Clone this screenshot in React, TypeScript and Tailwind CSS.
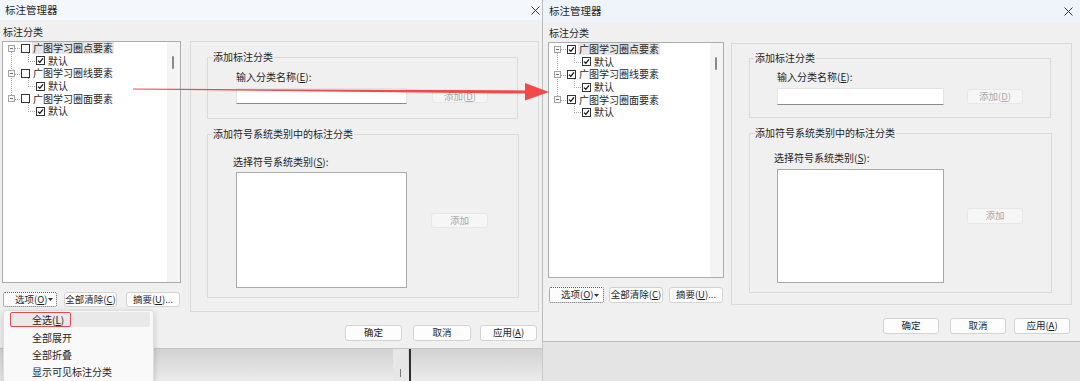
import React from "react";

const GROUPS = ["广图学习圈点要素", "广图学习圈线要素", "广图学习圈面要素"];

function Key({ k }: { k: string }) {
  return (
    <>
      (<span className="underline underline-offset-1">{k}</span>)
    </>
  );
}

function Btn({ className = "", disabled = false, children }: { className?: string; disabled?: boolean; children: React.ReactNode }) {
  return (
    <div
      className={`flex items-center justify-center rounded-[3px] border text-[9.5px] leading-none ${
        disabled ? "border-[#e7e7e7] bg-[#f6f6f6] text-[#a8a8a8]" : "border-[#d3d3d3] bg-[#fdfdfd] text-[#1f1f1f]"
      } ${className}`}
    >
      <span className="whitespace-nowrap">{children}</span>
    </div>
  );
}

function OptBtn({ className = "" }: { className?: string }) {
  return (
    <div className={`flex items-center rounded-[2px] border border-dotted border-[#5f5f5f] bg-[#fcfcfc] text-[9.5px] leading-none ${className}`}>
      <span className="ml-[11px] whitespace-nowrap">
        选项<Key k="O" />
      </span>
      <svg className="ml-auto mr-[4px] shrink-0" width="5" height="3" viewBox="0 0 5 3">
        <path d="M0 0 H5 L2.5 3 Z" fill="#333" />
      </svg>
    </div>
  );
}

function Close() {
  return (
    <svg width="9" height="9" viewBox="0 0 9 9" className="ml-auto">
      <path d="M0.5 0.5 L8.5 8.5 M8.5 0.5 L0.5 8.5" stroke="#333" strokeWidth="1" />
    </svg>
  );
}

function CheckBox({ checked, className = "" }: { checked: boolean; className?: string }) {
  return (
    <span className={`flex h-[9px] w-[9px] shrink-0 items-center justify-center border border-[#333] bg-white ${className}`}>
      {checked && (
        <svg width="7" height="7" viewBox="0 0 7 7">
          <path d="M1 3.6 L2.8 5.3 L6 1.4" stroke="#111" strokeWidth="1.3" fill="none" />
        </svg>
      )}
    </span>
  );
}

function Tree({ checked, className }: { checked: boolean; className: string }) {
  const c = (k: number) => 6.3 + 12.6 * k;
  return (
    <div className={`flex border border-[#ababab] bg-white ${className}`}>
      <div className="relative flex flex-1 flex-col">
        <svg className="absolute left-0 top-0" width="60" height="80" shapeRendering="crispEdges">
          <g stroke="#a3a3a3" strokeWidth="1" strokeDasharray="1 1" fill="none">
            <path d={`M8.5 ${c(0)} V${c(4)}`} />
            {[0, 2, 4].map((k) => (
              <path key={k} d={`M12 ${c(k) + 0.5} H18 M25.5 ${c(k) + 4.5} V${c(k + 1) + 0.5} H33`} />
            ))}
          </g>
        </svg>
        {GROUPS.map((g, i) => (
          <React.Fragment key={g}>
            <div className="relative flex h-[12.6px] items-center">
              <span className="ml-[5px] flex h-[7px] w-[7px] items-center justify-center border border-[#a3a3a3] bg-[#f7f7f7]">
                <span className="h-px w-[3px] bg-[#5b6f94]" />
              </span>
              <CheckBox checked={checked} className="ml-[6px]" />
              <span className={`ml-[2px] whitespace-nowrap px-px leading-[12px] ${i === 0 ? "bg-[#e6e6e6]" : ""}`}>{g}</span>
            </div>
            <div className="relative flex h-[12.6px] items-center">
              <CheckBox checked className="ml-[33px]" />
              <span className="ml-[3px] leading-[12px]">默认</span>
            </div>
          </React.Fragment>
        ))}
      </div>
      <div className="w-[13px] bg-[#f4f4f4]">
        <div className="ml-[5px] mt-[14px] h-[13px] w-[2px] rounded-full bg-[#8a8a8a]" />
      </div>
    </div>
  );
}

function Group({ title, className, children }: { title: string; className: string; children: React.ReactNode }) {
  return (
    <div className={`flex flex-col border border-[#dadada] ${className}`}>
      <span className="-mt-[7px] ml-[5px] h-[12px] w-fit whitespace-nowrap bg-[#f0f0f0] pr-px leading-[12px]">{title}</span>
      {children}
    </div>
  );
}

function Input({ className }: { className: string }) {
  return <div className={`border border-[#e3e3e3] border-b-[#8a8a8a] bg-white ${className}`} />;
}

export default function App() {
  return (
    <div className="relative flex h-[381px] w-[1080px] overflow-hidden bg-[#e3e3e3] font-['Noto_Sans_CJK_SC','Microsoft_YaHei',sans-serif] text-[10px] text-[#1f1f1f]">
      {/* left dialog, cut at the right */}
      <div className="flex w-[542px] shrink-0 flex-col overflow-hidden">
        <div className="flex h-[349px] w-[547px] shrink-0 flex-col border-b border-[#c4c4c4] bg-[#f0f0f0]">
          <div className="flex h-[20px] items-center bg-[#f4f7fc] pl-[5px] pr-[7px]">
            <span className="text-[10.5px] leading-none">标注管理器</span>
            <Close />
          </div>
          <div className="flex">
            <div className="ml-[2px] flex w-[179px] flex-col">
              <div className="mt-[6px] h-[12px] pl-px leading-[12px]">标注分类</div>
              <Tree checked={false} className="mt-[3px] h-[242px] w-[179px]" />
              <div className="mt-[9px] flex h-[15px]">
                <OptBtn className="ml-px w-[54px]" />
                <Btn className="ml-[7px] w-[53px]">
                  全部清除<Key k="C" />
                </Btn>
                <Btn className="ml-[9px] w-[54px]">
                  摘要<Key k="U" />...
                </Btn>
              </div>
            </div>
            <div className="ml-[9px] mt-[21px] flex h-[271px] w-[349px] flex-col border border-[#dadada]">
              <Group title="添加标注分类" className="ml-[16px] mt-[15px] h-[62px] w-[311px]">
                <div className="ml-[28px] mt-[8px] h-[12px] whitespace-nowrap leading-[12px]">
                  输入分类名称<Key k="E" />:
                </div>
                <div className="ml-[28px] mt-[5px] flex">
                  <Input className="h-[16px] w-[171px]" />
                  <Btn disabled className="ml-[25px] mt-[2px] h-[13px] w-[56px]">
                    添加<Key k="D" />
                  </Btn>
                </div>
              </Group>
              <Group title="添加符号系统类别中的标注分类" className="ml-[16px] mt-[15px] h-[164px] w-[312px]">
                <div className="ml-[25px] mt-[16px] h-[12px] whitespace-nowrap leading-[12px]">
                  选择符号系统类别<Key k="S" />:
                </div>
                <div className="ml-[28px] mt-[4px] flex">
                  <div className="h-[116px] w-[171px] border border-[#a9a9a9] bg-white" />
                  <Btn disabled className="ml-[24px] mt-[41px] h-[15px] w-[57px]">
                    添加
                  </Btn>
                </div>
              </Group>
            </div>
          </div>
          <div className="mt-auto flex justify-end pb-[7px] pr-[10px]">
            <Btn className="h-[16px] w-[57px]">确定</Btn>
            <Btn className="ml-[11px] h-[16px] w-[58px]">取消</Btn>
            <Btn className="ml-[9px] h-[16px] w-[57px]">
              应用<Key k="A" />
            </Btn>
          </div>
        </div>
        <div className="flex flex-1 bg-linear-to-b from-[#d2d2d2] to-[#ebebeb]">
          <div className="w-[393px]" />
          <div className="flex w-[15px] justify-center bg-[#e6e6e6]">
            <div className="mt-[20px] h-[8px] w-px bg-[#7a7a7a]" />
          </div>
          <div className="ml-px w-[2px] bg-[#2f2f2f]" />
        </div>
      </div>

      {/* right dialog */}
      <div className="flex w-[538px] flex-col">
        <div className="flex h-[342px] shrink-0 flex-col border-b border-l border-[#bcbcbc] bg-[#f0f0f0]">
          <div className="flex h-[22px] items-center bg-[#eff4fb] pl-[6px] pr-[7px]">
            <span className="text-[10.5px] leading-none">标注管理器</span>
            <Close />
          </div>
          <div className="flex">
            <div className="ml-[5px] flex w-[176px] flex-col">
              <div className="mt-[5px] h-[12px] pl-px leading-[12px]">标注分类</div>
              <Tree checked className="mt-[3px] h-[236px] w-[176px]" />
              <div className="mt-[9px] flex h-[16px]">
                <OptBtn className="ml-px w-[55px]" />
                <Btn className="ml-[5px] w-[54px]">
                  全部清除<Key k="C" />
                </Btn>
                <Btn className="ml-[6px] w-[54px]">
                  摘要<Key k="U" />...
                </Btn>
              </div>
            </div>
            <div className="ml-[7px] mt-[21px] flex h-[262px] w-[341px] flex-col border border-[#dadada]">
              <Group title="添加标注分类" className="ml-[17px] mt-[14px] h-[60px] w-[302px]">
                <div className="ml-[27px] mt-[7px] h-[12px] whitespace-nowrap leading-[12px]">
                  输入分类名称<Key k="E" />:
                </div>
                <div className="ml-[27px] mt-[5px] flex">
                  <Input className="h-[17px] w-[167px]" />
                  <Btn disabled className="ml-[23px] mt-px h-[15px] w-[56px]">
                    添加<Key k="D" />
                  </Btn>
                </div>
              </Group>
              <Group title="添加符号系统类别中的标注分类" className="ml-[17px] mt-[15px] h-[160px] w-[303px]">
                <div className="ml-[24px] mt-[13px] h-[12px] whitespace-nowrap leading-[12px]">
                  选择符号系统类别<Key k="S" />:
                </div>
                <div className="ml-[27px] mt-[5px] flex">
                  <div className="h-[114px] w-[167px] border border-[#a9a9a9] bg-white" />
                  <Btn disabled className="ml-[23px] mt-[39px] h-[16px] w-[56px]">
                    添加
                  </Btn>
                </div>
              </Group>
            </div>
          </div>
          <div className="mt-auto flex justify-end pb-[7px] pr-[10px]">
            <Btn className="h-[16px] w-[56px]">确定</Btn>
            <Btn className="ml-[11px] h-[16px] w-[56px]">取消</Btn>
            <Btn className="ml-[8px] h-[16px] w-[56px]">
              应用<Key k="A" />
            </Btn>
          </div>
        </div>
        <div className="flex-1 border-l border-[#c8c8c8] bg-[#e4e4e4]" />
      </div>

      {/* options dropdown menu */}
      <div className="absolute left-[3px] top-[310px] h-[80px] w-[151px] rounded-[3px] border border-[#dedede] bg-[#f9f9f9] pt-px shadow-[0_2px_6px_rgba(0,0,0,0.18)]">
        <div className="relative ml-[6px] mr-[3px] mb-[2px] flex h-[15px] items-center rounded-[2px] bg-[#e9e9e9]">
          <span className="absolute inset-y-0 left-0 w-[61px] rounded-[2px] border-[1.5px] border-[#e54a4a]" />
          <span className="whitespace-nowrap pl-[22px] leading-none">
            全选<Key k="L" />
          </span>
        </div>
        {["全部展开", "全部折叠", "显示可见标注分类"].map((t) => (
          <div key={t} className="flex h-[17px] items-center pl-[28px] leading-none">
            {t}
          </div>
        ))}
      </div>

      {/* red annotation arrow */}
      <svg className="pointer-events-none absolute left-0 top-0" width="1080" height="381">
        <polygon points="133,88.6 528,90.4 528,93.6 133,89.6" fill="#f24a4a" />
        <polygon points="525,83 549,92 525,100.5" fill="#f24a4a" />
      </svg>
    </div>
  );
}
